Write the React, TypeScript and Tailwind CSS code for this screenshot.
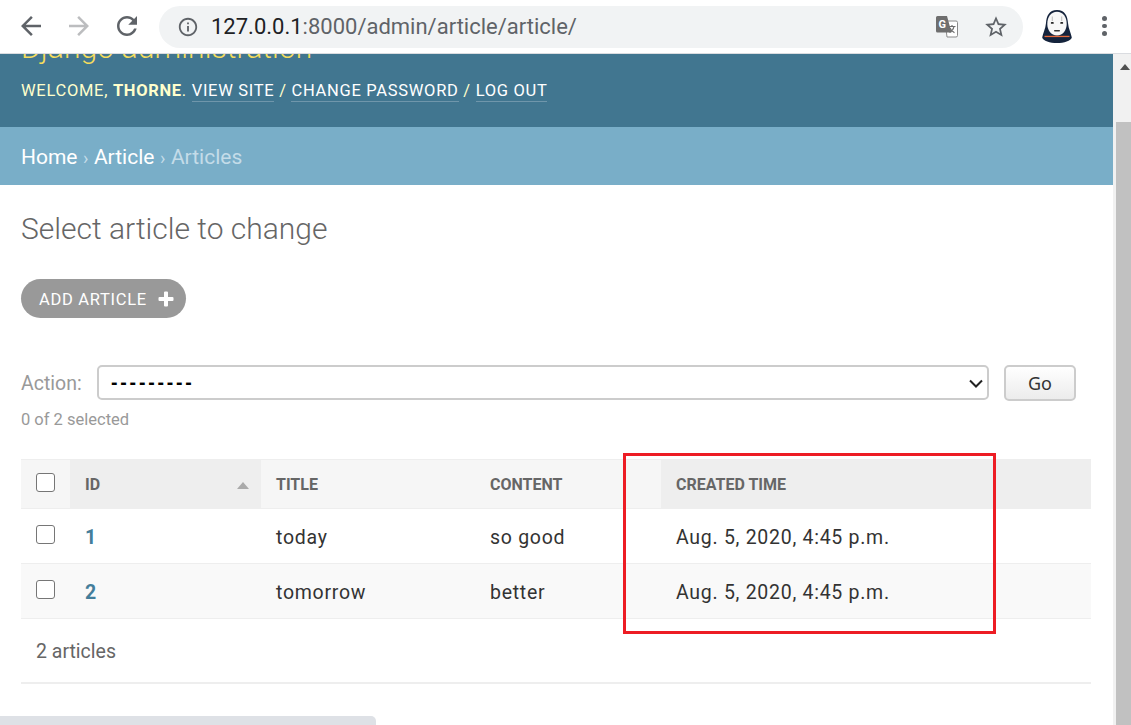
import React from "react";

const font = "font-['Roboto',sans-serif]";

const Icon = ({ d, className }: { d: string; className?: string }) => (
  <svg viewBox="0 0 24 24" className={className} fill="currentColor">
    <path d={d} />
  </svg>
);

const ARROW = "M20 11H7.83l5.59-5.59L12 4l-8 8 8 8 1.41-1.41L7.83 13H20v-2z";
const RELOAD =
  "M17.65 6.35C16.2 4.9 14.21 4 12 4c-4.42 0-7.99 3.58-7.99 8s3.57 8 7.99 8c3.73 0 6.84-2.55 7.73-6h-2.08c-.82 2.33-3.04 4-5.65 4-3.31 0-6-2.69-6-6s2.69-6 6-6c1.66 0 3.14.69 4.22 1.78L13 11h7V4l-2.35 2.35z";
const INFO =
  "M11 7h2v2h-2zm0 4h2v6h-2zm1-9C6.48 2 2 6.48 2 12s4.48 10 10 10 10-4.48 10-10S17.52 2 12 2zm0 18c-4.41 0-8-3.59-8-8s3.59-8 8-8 8 3.59 8 8-3.59 8-8 8z";
const STAR =
  "M22 9.24l-7.19-.62L12 2 9.19 8.63 2 9.24l5.46 4.73L5.82 21 12 17.27 18.18 21l-1.63-7.03L22 9.24zM12 15.4l-3.76 2.27 1-4.28-3.32-2.88 4.38-.38L12 6.1l1.71 4.04 4.38.38-3.32 2.88 1 4.28L12 15.4z";

const TranslateIcon = () => (
  <svg viewBox="0 0 24 24" className="w-[24px] h-[24px]">
    <path d="M10 6h11a1.5 1.5 0 0 1 1.5 1.5v13a1.5 1.5 0 0 1-1.5 1.5h-9z" fill="#fff" stroke="#8a8a8a" strokeWidth="1" />
    <path d="M2.5 1h9.5l4.5 16.5H2.5A1.5 1.5 0 0 1 1 16V2.500A1.500 1.500 0 0 1 2.500 1z" fill="#6e6e6e" />
    <text x="3.500" y="13" fontSize="11" fontWeight="700" fill="#fff" fontFamily="Roboto, sans-serif">
      G
    </text>
    <path d="M13.500 11.500h7M17 10v1.500M19 11.500c-.5 2.500-2.500 5-4.500 6M15 13c.8 2 2.500 3.800 4.500 4.800" fill="none" stroke="#6e6e6e" strokeWidth="1.200" />
  </svg>
);

const Avatar = () => (
  <svg viewBox="0 0 30 33" className="w-[30px] h-[33px]">
    <path d="M15 0C7 0 4.500 6 4 13 3.500 19 1 23 0.200 27.500 1 31 8 33 15 33s14-2 14.800-5.500C29 23 26.500 19 26 13 25.500 6 23 0 15 0z" fill="#14233c" />
    <path d="M15 1.800C9 1.800 5.300 7 5.300 14c0 6 3.700 11.500 9.700 11.500S24.700 20 24.700 14C24.700 7 21 1.800 15 1.800z" fill="#f7f7f7" />
    <rect x="2.500" y="25.800" width="25" height="1.300" fill="#e4683a" />
    <rect x="8.800" y="12" width="3" height="1.800" rx="0.900" fill="#222" />
    <rect x="18.200" y="12" width="3" height="1.800" rx="0.900" fill="#222" />
    <rect x="9.800" y="6.500" width="1" height="4.500" fill="#bbb" />
    <rect x="19.200" y="6.500" width="1" height="4.500" fill="#bbb" />
    <rect x="12" y="20" width="6" height="1.400" rx="0.700" fill="#333" />
  </svg>
);

const BrowserBar = () => (
  <div className="h-[54px] shrink-0 bg-white border-b border-[#dadce0] flex items-center pl-[16px] pb-[1px]">
    <Icon d={ARROW} className="w-[30px] h-[30px] text-[#5f6368]" />
    <Icon d={ARROW} className="w-[30px] h-[30px] text-[#bcbdbf] rotate-180 ml-[18px]" />
    <Icon d={RELOAD} className="w-[30px] h-[30px] text-[#5f6368] ml-[18px]" />
    <div className="ml-[17px] w-[864px] h-[42px] rounded-full bg-[#f1f3f4] flex items-center pl-[18px] pr-[14px] mt-[1px]">
      <Icon d={INFO} className="w-[22px] h-[22px] text-[#5f6368]" />
      <span className={`${font} ml-[12px] text-[22px] text-[#5f6368] leading-none pt-[1px]`}>
        <span className="text-[#202124]">127.0.0.1</span>:8000/admin/article/article/
      </span>
      <div className="ml-auto flex items-center gap-[24px]">
        <TranslateIcon />
        <Icon d={STAR} className="w-[26px] h-[26px] text-[#5f6368]" />
      </div>
    </div>
    <div className="ml-[19px]">
      <Avatar />
    </div>
    <div className="ml-[30px] flex flex-col gap-[3px]">
      <span className="w-[4.500px] h-[4.500px] rounded-full bg-[#5f6368]" />
      <span className="w-[4.500px] h-[4.500px] rounded-full bg-[#5f6368]" />
      <span className="w-[4.500px] h-[4.500px] rounded-full bg-[#5f6368]" />
    </div>
  </div>
);

const UserLink = ({ children }: { children: React.ReactNode }) => (
  <span className="text-white border-b border-[#6f96ab] pb-[1px]">{children}</span>
);

const AdminHeader = () => (
  <div className={`${font} h-[73px] bg-[#417690] overflow-hidden px-[21px] relative`}>
    <div className="text-[#f5dd5d] text-[30px] font-light leading-[32px] -mt-[22px] tracking-[0.100px]">
      Django administration
    </div>
    <div className="mt-[16px] text-[#ffffcc] text-[16.500px] leading-[22px] tracking-[0.700px] whitespace-pre">
      WELCOME, <b className="font-bold">THORNE</b>. <UserLink>VIEW SITE</UserLink> / <UserLink>CHANGE PASSWORD</UserLink> / <UserLink>LOG OUT</UserLink>
    </div>
  </div>
);

const Breadcrumbs = () => (
  <div className={`${font} h-[58px] bg-[#79aec8] flex items-center pt-[3px] px-[21px] text-[21px] text-[#c4dce8]`}>
    <span className="text-white">Home</span>
    <span className="mx-[5.500px] text-[18px]">›</span>
    <span className="text-white">Article</span>
    <span className="mx-[5.500px] text-[18px]">›</span>
    <span>Articles</span>
  </div>
);

const Checkbox = () => (
  <input
    type="checkbox"
    className="appearance-none block w-[19px] h-[19px] bg-white border border-[#767676] rounded-[3px]"
  />
);

const rows = [
  { id: 1, title: "today", content: "so good", created: "Aug. 5, 2020, 4:45 p.m.", bg: "bg-white" },
  { id: 2, title: "tomorrow", content: "better", created: "Aug. 5, 2020, 4:45 p.m.", bg: "bg-[#f9f9f9]" },
];

const thText = "text-left align-middle pl-[15px] pt-[2px] text-[16px] font-bold text-[#666]";

const ResultTable = () => (
  <table className="w-[1070px] table-fixed border-collapse">
    <thead>
      <tr className="h-[49px] bg-[#f6f6f6] border-y border-[#eee]">
        <th className="w-[49px] pl-[15px] pb-[3px]">
          <Checkbox />
        </th>
        <th className={`w-[191px] bg-[#eee] ${thText}`}>
          <div className="flex items-center justify-between pr-[12px]">
            ID
            <span className="w-0 h-0 border-x-[6.500px] border-x-transparent border-b-[7px] border-b-[#aaa] mt-[1px]" />
          </div>
        </th>
        <th className={`w-[214px] ${thText}`}>TITLE</th>
        <th className={`w-[186px] ${thText}`}>CONTENT</th>
        <th className={`bg-[#eee] ${thText}`}>CREATED TIME</th>
      </tr>
    </thead>
    <tbody className="text-[19.500px] tracking-[0.720px] text-[#333]">
      {rows.map((r) => (
        <tr key={r.id} className={`h-[55px] border-b border-[#eee] ${r.bg}`}>
          <td className="pl-[15px] pb-[3px]">
            <Checkbox />
          </td>
          <td className="pl-[15px] pt-[4px] font-bold text-[#447e9b]">{r.id}</td>
          <td className="pl-[15px] pt-[4px]">{r.title}</td>
          <td className="pl-[15px] pt-[4px]">{r.content}</td>
          <td className="pl-[15px] pt-[4px]">{r.created}</td>
        </tr>
      ))}
    </tbody>
  </table>
);

const Content = () => (
  <div className={`${font} pl-[21px] pr-[22px] relative`}>
    <h1 className="pt-[26px] text-[30px] leading-[36px] font-light text-[#666]">Select article to change</h1>
    <div className="mt-[32px] w-[165px] h-[39px] rounded-full bg-[#999] text-white flex items-center pl-[18px] text-[16.500px] tracking-[0.700px] whitespace-nowrap">
      <span className="pt-[3px]">ADD ARTICLE</span>
      <svg viewBox="0 0 16 16" className="w-[16px] h-[16px] ml-[11px]" fill="#fff">
        <path d="M6 1.500a1 1 0 0 1 1-1h2a1 1 0 0 1 1 1V6h4.500a1 1 0 0 1 1 1v2a1 1 0 0 1-1 1H10v4.500a1 1 0 0 1-1 1H7a1 1 0 0 1-1-1V10H1.500a1 1 0 0 1-1-1V7a1 1 0 0 1 1-1H6z" />
      </svg>
    </div>
    <div className="mt-[47px] flex items-center h-[36px]">
      <label className="text-[19.500px] text-[#999] w-[76px] pt-[2px]">Action:</label>
      <div className="relative w-[892px] h-[35px] mb-[1px]">
        <select className="appearance-none w-full h-full bg-white border-2 border-[#ccc] rounded-[5px] pl-[12px] text-[19.500px] font-bold tracking-[2.800px] text-black font-['Liberation_Sans',sans-serif]">
          <option>---------</option>
        </select>
        <svg viewBox="0 0 14 9" className="absolute right-[6px] top-[14px] w-[14px] h-[9px]" fill="none" stroke="#222" strokeWidth="2">
          <path d="M1 1.500l6 6 6-6" />
        </svg>
      </div>
      <button className="ml-[15px] w-[72px] h-[36px] rounded-[5px] border-2 border-[#ccc] bg-gradient-to-b from-white to-[#ececec] text-[18px] text-[#333] font-['Noto_Sans',sans-serif]">
        Go
      </button>
    </div>
    <div className="mt-[8px] text-[16.500px] leading-[22px] text-[#999]">0 of 2 selected</div>
    <div className="mt-[28px]">
      <ResultTable />
    </div>
    <div className="w-[1070px] h-[65px] border-b-2 border-[#eee] flex items-center pl-[15px] pt-[2px] text-[19.500px] text-[#666]">2 articles</div>
    {/* red annotation drawn over the screenshot */}
    <div className="absolute left-[623px] top-[268px] w-[373px] h-[181px] border-[3px] border-[#ed1c24]" />
  </div>
);

const Scrollbar = () => (
  <div className="w-[18px] bg-[#f1f1f1] border-l border-[#f1f1f1] relative shrink-0">
    <span className="absolute left-[6px] top-[10px] w-0 h-0 border-x-[5.500px] border-x-transparent border-b-[6px] border-b-[#505050]" />
    <div className="absolute left-[2px] right-0 top-[68px] bottom-0 bg-[#c1c1c1]" />
  </div>
);

export default function App() {
  return (
    <div className="w-[1131px] h-[725px] overflow-hidden bg-white flex flex-col relative">
      <BrowserBar />
      <div className="flex flex-1 min-h-0">
        <div className="flex-1 min-w-0 overflow-hidden">
          <AdminHeader />
          <Breadcrumbs />
          <Content />
        </div>
        <Scrollbar />
      </div>
      <div className="absolute left-0 bottom-0 w-[376px] h-[9px] bg-[#dee1e6] rounded-tr-[5px]" />
    </div>
  );
}
